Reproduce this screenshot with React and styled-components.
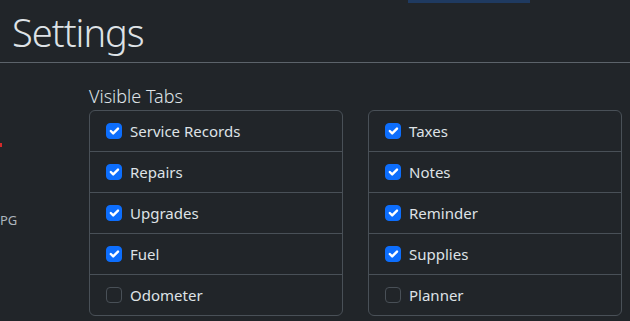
import React from "react";
import styled, { createGlobalStyle } from "styled-components";

const Global = createGlobalStyle`
  html, body {
    margin: 0;
    padding: 0;
    background: #212529;
    color: #dee2e6;
    font-family: "Noto Sans", "Open Sans", sans-serif;
    overflow: hidden;
  }
`;

const leftTabs = [
  { label: "Service Records", on: true },
  { label: "Repairs", on: true },
  { label: "Upgrades", on: true },
  { label: "Fuel", on: true },
  { label: "Odometer", on: false },
];

const rightTabs = [
  { label: "Taxes", on: true },
  { label: "Notes", on: true },
  { label: "Reminder", on: true },
  { label: "Supplies", on: true },
  { label: "Planner", on: false },
];

const Check = ({ on }) => (
  <Box $on={on}>
    {on && (
      <svg width="16" height="16" viewBox="0 0 20 20">
        <path d="m6 10 3 3 6-6" fill="none" stroke="#fff" strokeWidth="3" strokeLinecap="round" strokeLinejoin="round" />
      </svg>
    )}
  </Box>
);

const TabList = ({ items }) => (
  <List>
    {items.map((t) => (
      <Item key={t.label}>
        <Check on={t.on} />
        <span>{t.label}</span>
      </Item>
    ))}
  </List>
);

const App = () => {
  return (
    <Page>
      <Global />
      <TopBar>
        <ActiveTab />
      </TopBar>
      <Header>
        <Title>Settings</Title>
      </Header>
      <Body>
        <Side>
          <RedMark />
          <SideLabel>PG</SideLabel>
        </Side>
        <Main>
          <Lead>Visible Tabs</Lead>
          <Columns>
            <TabList items={leftTabs} />
            <TabList items={rightTabs} />
          </Columns>
        </Main>
      </Body>
    </Page>
  );
};

export default App;

const Page = styled.div`
  width: 630px;
  height: 321px;
  overflow: hidden;
`;

const TopBar = styled.div`
  height: 3px;
  display: flex;
  padding-left: 408px;
`;

const ActiveTab = styled.div`
  width: 122px;
  height: 3px;
  background: #1f3a60;
`;

const Header = styled.div`
  height: 60px;
  border-bottom: 1px solid #5c636a;
  padding-left: 12px;
  box-sizing: border-box;
  display: flex;
  align-items: center;
`;

const Title = styled.h1`
  margin: 0;
  font-size: 38px;
  font-weight: 300;
  line-height: 1.2;
  letter-spacing: -1px;
  color: #dee2e6;
`;

const Body = styled.div`
  display: flex;
`;

const Side = styled.div`
  width: 77px;
  display: flex;
  flex-direction: column;
  align-items: flex-start;
  padding-top: 80px;
`;

const RedMark = styled.div`
  width: 2px;
  height: 4px;
  background: #d42a2a;
`;

const SideLabel = styled.div`
  margin-top: 64px;
  font-size: 13px;
  line-height: 18px;
  color: #adb5bd;
`;

const Main = styled.div`
  flex: 1;
  padding: 20px 8px 0 12px;
`;

const Lead = styled.div`
  font-size: 18px;
  font-weight: 300;
  line-height: 26px;
  margin-bottom: 1px;
`;

const Columns = styled.div`
  display: grid;
  grid-template-columns: 254px 254px;
  gap: 25px;
`;

const List = styled.div`
  border: 1px solid #495057;
  border-radius: 6px;
  display: flex;
  flex-direction: column;
`;

const Item = styled.div`
  display: flex;
  align-items: center;
  gap: 8px;
  height: 40px;
  padding: 0 16px;
  font-size: 15px;
  color: #dee2e6;
  & + & {
    border-top: 1px solid #495057;
  }
`;

const Box = styled.div`
  width: 16px;
  height: 16px;
  box-sizing: border-box;
  border-radius: 4px;
  background: ${(p) => (p.$on ? "#0d6efd" : "#212529")};
  border: 1px solid ${(p) => (p.$on ? "#0d6efd" : "#495057")};
  display: flex;
  align-items: center;
  justify-content: center;
  & svg {
    flex-shrink: 0;
  }
`;
